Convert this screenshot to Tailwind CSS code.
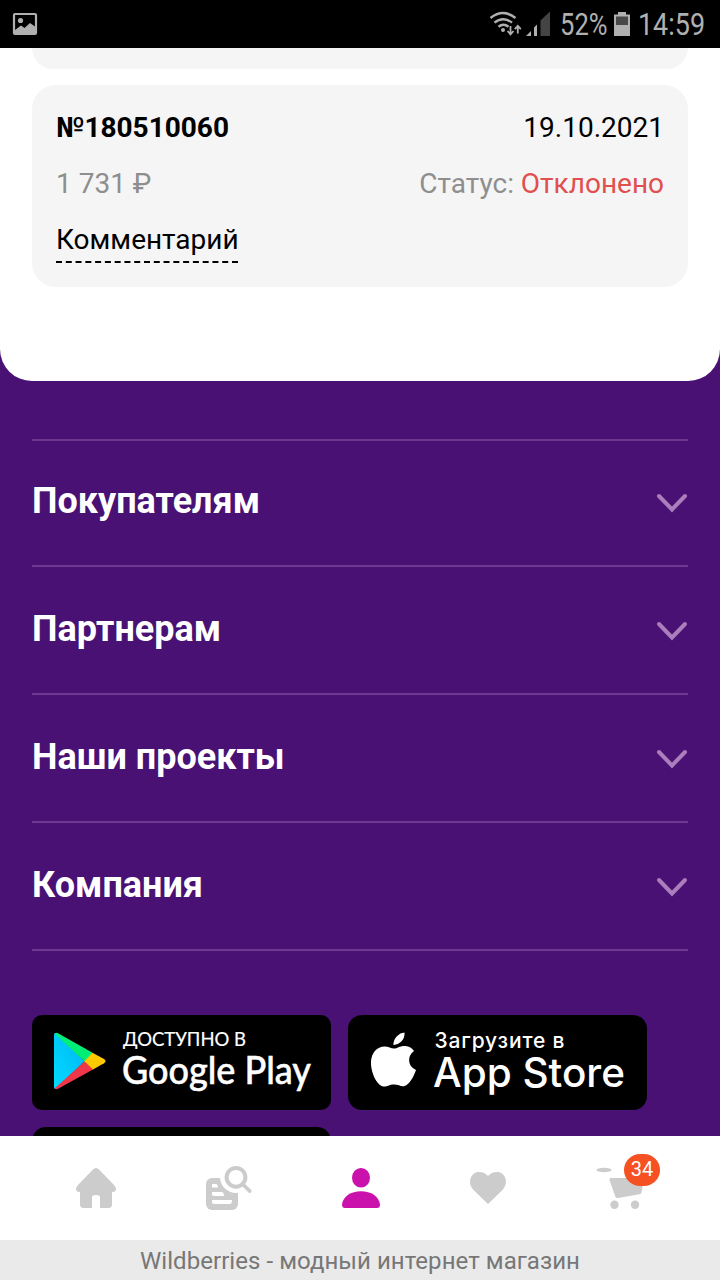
<!DOCTYPE html>
<html lang="ru">
<head>
    <meta charset="UTF-8">
    <meta name="viewport" content="width=device-width, initial-scale=1.0">
    <title>Wildberries - модный интернет магазин</title>
    <script src="https://cdn.jsdelivr.net/npm/@tailwindcss/browser@4"></script>
</head>
<body class="bg-white font-['Roboto',sans-serif]">
<div class="flex h-[1280px] w-[720px] flex-col overflow-hidden">

    <!-- Status bar -->
    <header class="flex h-12 shrink-0 justify-between bg-black">
        <svg class="h-12 w-12" viewBox="0 0 48 48">
            <rect x="14" y="14" width="22" height="20" rx="1" fill="none" stroke="#b0b0b0" stroke-width="2.2"/>
            <circle cx="20.5" cy="20.5" r="2.6" fill="#b0b0b0"/>
            <path d="M15 30l6-4.500 3.500 2.500 5.500-5 5 3.500V34H15z" fill="#b0b0b0"/>
        </svg>
        <svg class="h-12 w-60" viewBox="480 0 240 48">
            <g fill="none" stroke="#b0b0b0" stroke-width="2.4">
                <path d="M490.500 18q12.500-9.800 25 0M494.500 22.600q8.500-6.800 17.500 0M498.500 26.800q5-4 10 0"/>
                <path d="M510.500 26v8M507.500 31l3 3.300 3-3.300M517.800 33.500v-7.500M514.800 29.200l3-3.300 3 3.300" stroke-width="1.800"/>
            </g>
            <circle cx="503" cy="30" r="2" fill="#b0b0b0"/>
            <path d="M526 36l5-5v5zM534 27.500l3-3V36h-3z" fill="#b0b0b0"/>
            <path d="M540.500 20.500l9.500-9V36h-9.500z" fill="#444"/>
            <text x="560" y="35.300" font-size="31" fill="#b0b0b0" textLength="47.500" lengthAdjust="spacingAndGlyphs">52%</text>
            <path d="M618 12h8v2.500h4V36h-16V14.500h4z" fill="#b0b0b0"/>
            <path d="M616 16.500h12v8.500h-12z" fill="#484848"/>
            <text x="638" y="35.300" font-size="31" fill="#b0b0b0" textLength="67" lengthAdjust="spacingAndGlyphs">14:59</text>
        </svg>
    </header>

    <!-- Page content -->
    <main class="min-h-0 flex-1 overflow-hidden bg-[#481173]">
        <section class="flex h-[333px] flex-col gap-4 rounded-b-[32px] bg-white px-8">
            <div class="h-[21px] shrink-0 rounded-b-3xl bg-[#f5f5f5]"></div>
            <article class="flex h-[202px] flex-col gap-5 rounded-3xl bg-[#f5f5f5] px-6 pt-[25px] text-[28px] leading-9 text-black">
                <div class="flex justify-between">
                    <span class="font-bold">№180510060</span>
                    <span>19.10.2021</span>
                </div>
                <div class="flex justify-between text-[#8e8e8e]">
                    <span>1 731 ₽</span>
                    <span>Статус: <span class="text-[#e14f4f]">Отклонено</span></span>
                </div>
                <div class="flex">
                    <span class="h-[41px] w-[182px] border-b-2 border-dashed border-black whitespace-nowrap">Комментарий</span>
                </div>
            </article>
        </section>

        <footer class="px-8 pt-[58px]">
            <div class="flex h-32 items-center justify-between border-y-2 border-[#6d388f]">
                <h2 class="pb-1 text-4xl font-bold text-white">Покупателям</h2>
                <svg class="h-8 w-8" viewBox="0 0 32 32" fill="none" stroke="#aa7dbc" stroke-width="4" stroke-linecap="round"><path d="M3 9l13 13.500L29 9"/></svg>
            </div>
            <div class="flex h-32 items-center justify-between border-b-2 border-[#6d388f] pt-0.5">
                <h2 class="pb-1 text-4xl font-bold text-white">Партнерам</h2>
                <svg class="h-8 w-8" viewBox="0 0 32 32" fill="none" stroke="#aa7dbc" stroke-width="4" stroke-linecap="round"><path d="M3 9l13 13.500L29 9"/></svg>
            </div>
            <div class="flex h-32 items-center justify-between border-b-2 border-[#6d388f] pt-0.5">
                <h2 class="pb-1 text-4xl font-bold text-white">Наши проекты</h2>
                <svg class="h-8 w-8" viewBox="0 0 32 32" fill="none" stroke="#aa7dbc" stroke-width="4" stroke-linecap="round"><path d="M3 9l13 13.500L29 9"/></svg>
            </div>
            <div class="flex h-32 items-center justify-between border-b-2 border-[#6d388f] pt-0.5">
                <h2 class="pb-1 text-4xl font-bold text-white">Компания</h2>
                <svg class="h-8 w-8" viewBox="0 0 32 32" fill="none" stroke="#aa7dbc" stroke-width="4" stroke-linecap="round"><path d="M3 9l13 13.500L29 9"/></svg>
            </div>

            <!-- Store badges -->
            <div class="mt-16 flex flex-wrap gap-[17px]">
                <a class="h-[95px] w-[299px] rounded-[10px] bg-black">
                    <svg class="h-full w-full" viewBox="32 1015 299 95">
                        <defs>
                            <linearGradient id="playBlue" x1="1" y1="0" x2="0" y2="1"><stop stop-color="#00b4f5"/><stop offset="1" stop-color="#00dcff"/></linearGradient>
                        </defs>
                        <path d="M54 1035q0-2 1.500-2l29 28.500-29 27.500q-1.500 0-1.500-2z" fill="url(#playBlue)"/>
                        <path d="M54.500 1033.500q1.500-1.500 4 0l34.500 19.500-8.500 8.500z" fill="#00ee76"/>
                        <path d="M92.500 1052.700l11.500 6.300q3 2 0 4.300l-11.500 6.400-8.500-8.200z" fill="#ffc900"/>
                        <path d="M54.500 1088.500q1.500 1.300 4 0l34.500-19-8.500-8z" fill="#f0374a"/>
                        <text x="123" y="1046" font-family="Lato" font-size="19" fill="#fff" stroke="#fff" stroke-width=".2" textLength="123" lengthAdjust="spacingAndGlyphs">ДОСТУПНО В</text>
                        <text x="122" y="1083.500" font-family="Lato" font-size="38" font-weight="500" fill="#fff" stroke="#fff" stroke-width=".5" textLength="189" lengthAdjust="spacingAndGlyphs">Google Play</text>
                    </svg>
                </a>
                <a class="h-[95px] w-[299px] rounded-[14px] bg-black">
                    <svg class="h-full w-full" viewBox="348 1015 299 95" fill="#fff">
                        <path d="M404.500 1032.500q.5 5.500-3.500 9.300-3.500 3.400-7.500 3.200-.4-5 3.400-8.800 3.200-3.300 7.600-3.700z"/>
                        <path d="M394 1048.500c3.500 0 6-3 11.500-2.500q5.500.5 8.500 5c-7 4.500-6.500 15.500 2 19-2 6-6.500 14.800-11.500 16-4 .8-5.500-1.500-10.500-1.500s-6.500 2.300-10.500 2c-7-1-13-15-12.500-25 .5-8.500 6-15 13.500-15 4 0 6.500 2 9.500 2z"/>
                        <text x="434.500" y="1047.500" font-family="Inter" font-size="21" font-weight="500" textLength="130">Загрузите в</text>
                        <text x="433" y="1086.500" font-family="Inter" font-size="40.500" font-weight="500" textLength="192" lengthAdjust="spacingAndGlyphs">App Store</text>
                    </svg>
                </a>
                <a class="h-[95px] w-[299px] rounded-[14px] bg-black"></a>
            </div>
        </footer>
    </main>

    <!-- Bottom navigation -->
    <nav class="flex h-[104px] shrink-0 bg-white px-[30px]">
        <svg class="h-[104px] w-[132px]" viewBox="30 1136 132 104" fill="#ccc">
            <path d="M93.500 1169q2.500-2 5 0l16 16.500q1.500 1.500 1.500 3.500 0 3-3.500 3H112v12.500q0 3.500-3.500 3.500H100v-11q0-2-4-2t-4 2v11h-8.500q-3.500 0-3.500-3.500V1192h-.5q-3.500 0-3.500-3 0-2 1.500-3.500z"/>
        </svg>
        <svg class="h-[104px] w-[132px]" viewBox="162 1136 132 104">
            <rect x="206" y="1178" width="32" height="32" rx="6" fill="#ccc"/>
            <path d="M212 1184h4.500q1.500 1 1.500 3.500h-6zM212 1192h10.500q1.500 1 1.500 4h-10q-2 0-2-2zM212 1200h20q0 4-2 4h-16q-2 0-2-2z" fill="#fff"/>
            <circle cx="236" cy="1177" r="16" fill="#fff"/>
            <circle cx="236" cy="1177.300" r="9.400" fill="none" stroke="#ccc" stroke-width="4"/>
            <path d="M243 1184.500l6.800 6.600" stroke="#ccc" stroke-width="3.600" stroke-linecap="round"/>
        </svg>
        <svg class="h-[104px] w-[132px]" viewBox="294 1136 132 104" fill="#cb11ab">
            <ellipse cx="361" cy="1177.700" rx="9" ry="9.800"/>
            <path d="M342 1204.500c1-8 9-13.200 19-13.200s18 5.200 19 13.200q0 3.500-3 3.500h-32q-3 0-3-3.500z"/>
        </svg>
        <svg class="h-[104px] w-[132px]" viewBox="426 1136 132 104" fill="#ccc">
            <path d="M488 1204l-14.500-14c-7-7.500-2.500-18 5.500-18q5.500 0 9 4 3.500-4 9-4c8 0 12.500 10.500 5.500 18z"/>
        </svg>
        <div class="relative">
            <svg class="h-[104px] w-[132px]" viewBox="558 1136 132 104" fill="#ccc">
                <ellipse cx="604" cy="1170" rx="7.800" ry="2.200"/>
                <path d="M611 1178h33l-2.500 14.500q-.3 1.500-2 1.800l-21.500 3.700q-2 .3-2.700-1.500l-5.800-16.500q-.5-2 1.500-2z"/>
                <circle cx="614.500" cy="1204.800" r="4.200"/>
                <circle cx="635" cy="1204.800" r="4.200"/>
            </svg>
            <span class="absolute top-[18px] left-[66px] h-8 w-9 rounded-full bg-[#f55123] text-center text-xl leading-[31px] text-white">34</span>
        </div>
    </nav>

    <div class="h-10 shrink-0 bg-[#eaeaea] text-center text-2xl leading-[42px] tracking-[0.05px] text-[#777]">Wildberries - модный интернет магазин</div>
</div>
</body>
</html>
